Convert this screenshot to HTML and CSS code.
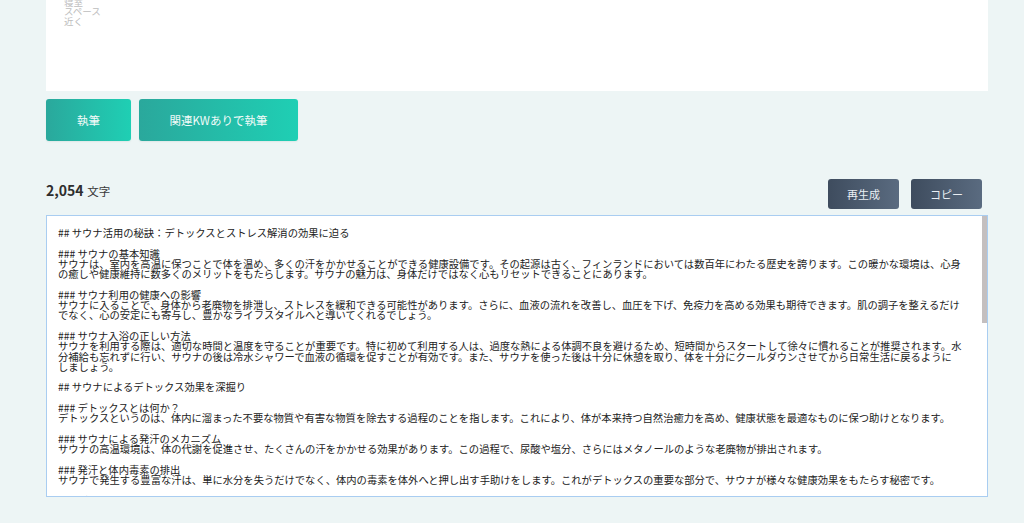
FILE: index.html
```html
<!DOCTYPE html>
<html lang="ja">
<head>
<meta charset="utf-8">
<title>サウナ記事作成</title>
<link rel="stylesheet" href="styles.css">
</head>
<body>
<main class="page">
  <div class="input-box">
    <div class="placeholder">寝室
スペース
近く</div>
  </div>
  <div class="actions">
    <button class="btn-teal btn-write">執筆</button>
    <button class="btn-teal btn-kw">関連KWありで執筆</button>
  </div>
  <div class="result-head">
    <div class="count"><span class="count-num">2,054</span> <span class="count-unit">文字</span></div>
    <div class="tools">
      <button class="btn-dark">再生成</button>
      <button class="btn-dark">コピー</button>
    </div>
  </div>
  <div class="output-wrap">
  <div class="output">## サウナ活用の秘訣：デトックスとストレス解消の効果に迫る

### サウナの基本知識
サウナは、室内を高温に保つことで体を温め、多くの汗をかかせることができる健康設備です。その起源は古く、フィンランドにおいては数百年にわたる歴史を誇ります。この暖かな環境は、心身
の癒しや健康維持に数多くのメリットをもたらします。サウナの魅力は、身体だけではなく心もリセットできることにあります。

### サウナ利用の健康への影響
サウナに入ることで、身体から老廃物を排泄し、ストレスを緩和できる可能性があります。さらに、血液の流れを改善し、血圧を下げ、免疫力を高める効果も期待できます。肌の調子を整えるだけ
でなく、心の安定にも寄与し、豊かなライフスタイルへと導いてくれるでしょう。

### サウナ入浴の正しい方法
サウナを利用する際は、適切な時間と温度を守ることが重要です。特に初めて利用する人は、過度な熱による体調不良を避けるため、短時間からスタートして徐々に慣れることが推奨されます。水
分補給も忘れずに行い、サウナの後は冷水シャワーで血液の循環を促すことが有効です。また、サウナを使った後は十分に休憩を取り、体を十分にクールダウンさせてから日常生活に戻るように
しましょう。

## サウナによるデトックス効果を深掘り

### デトックスとは何か？
デトックスというのは、体内に溜まった不要な物質や有害な物質を除去する過程のことを指します。これにより、体が本来持つ自然治癒力を高め、健康状態を最適なものに保つ助けとなります。

### サウナによる発汗のメカニズム
サウナの高温環境は、体の代謝を促進させ、たくさんの汗をかかせる効果があります。この過程で、尿酸や塩分、さらにはメタノールのような老廃物が排出されます。

### 発汗と体内毒素の排出
サウナで発生する豊富な汗は、単に水分を失うだけでなく、体内の毒素を体外へと押し出す手助けをします。これがデトックスの重要な部分で、サウナが様々な健康効果をもたらす秘密です。

### デトックス効果を高めるサウナの活用法
サウナの前後にしっかりと水分を補給し、入浴と休憩を繰り返すことで、デトックス効果をさらに高めることができます。</div>
  <div class="scroll-thumb"></div>
  </div>
</main>
</body>
</html>
```

FILE: styles.css
```css
* {
  box-sizing: border-box;
}

html, body {
  margin: 0;
  padding: 0;
  height: 100%;
  overflow: hidden;
}

body {
  background: #edf5f5;
  font-family: "Noto Sans CJK JP", "Noto Sans", sans-serif;
  color: #333;
}

.page {
  width: 942px;
  margin-left: 46px;
  display: flex;
  flex-direction: column;
}

.input-box {
  height: 91px;
  background: #fff;
  overflow: hidden;
  padding: 0 18px;
}

.placeholder {
  margin-top: -2px;
  white-space: pre;
  font-size: 9.5px;
  line-height: 9.3px;
  color: #bdbdbd;
}

.actions {
  display: flex;
  gap: 8px;
  margin-top: 8px;
}

.btn-teal {
  height: 42px;
  border: none;
  border-radius: 3px;
  background: linear-gradient(90deg, #2aa89c 0%, #1fcfb4 100%);
  color: #f2fbf9;
  font-family: inherit;
  font-size: 11.5px;
  padding: 0;
  box-shadow: 0 1px 2px rgba(0, 0, 0, 0.06);
}

.btn-write {
  width: 85px;
}

.btn-kw {
  width: 159px;
}

.result-head {
  display: flex;
  justify-content: space-between;
  align-items: flex-start;
  margin-top: 38px;
  padding-right: 6px;
}

.count {
  padding-top: 1px;
  line-height: 18px;
}

.count-num {
  font-size: 14px;
  font-weight: 700;
  color: #2e2e2e;
}

.count-unit {
  font-size: 11.5px;
  color: #3a3a3a;
}

.tools {
  display: flex;
  gap: 12px;
}

.btn-dark {
  width: 71px;
  height: 30px;
  border: none;
  border-radius: 3px;
  background: linear-gradient(90deg, #3e4c5e 0%, #5a6b80 100%);
  color: #e9eef3;
  font-family: inherit;
  font-size: 11px;
  padding: 0;
}

.output-wrap {
  position: relative;
  margin-top: 6px;
}

.output {
  height: 282px;
  background: #fff;
  border: 1px solid #a9cdf1;
  padding: 12px 17px 0 11px;
  white-space: pre;
  overflow: hidden;
  font-size: 10.3px;
  line-height: 10.3px;
  color: #222;
}

.scroll-thumb {
  position: absolute;
  top: 1px;
  right: 1px;
  width: 5px;
  height: 107px;
  background: #c4bfbf;
}
```
